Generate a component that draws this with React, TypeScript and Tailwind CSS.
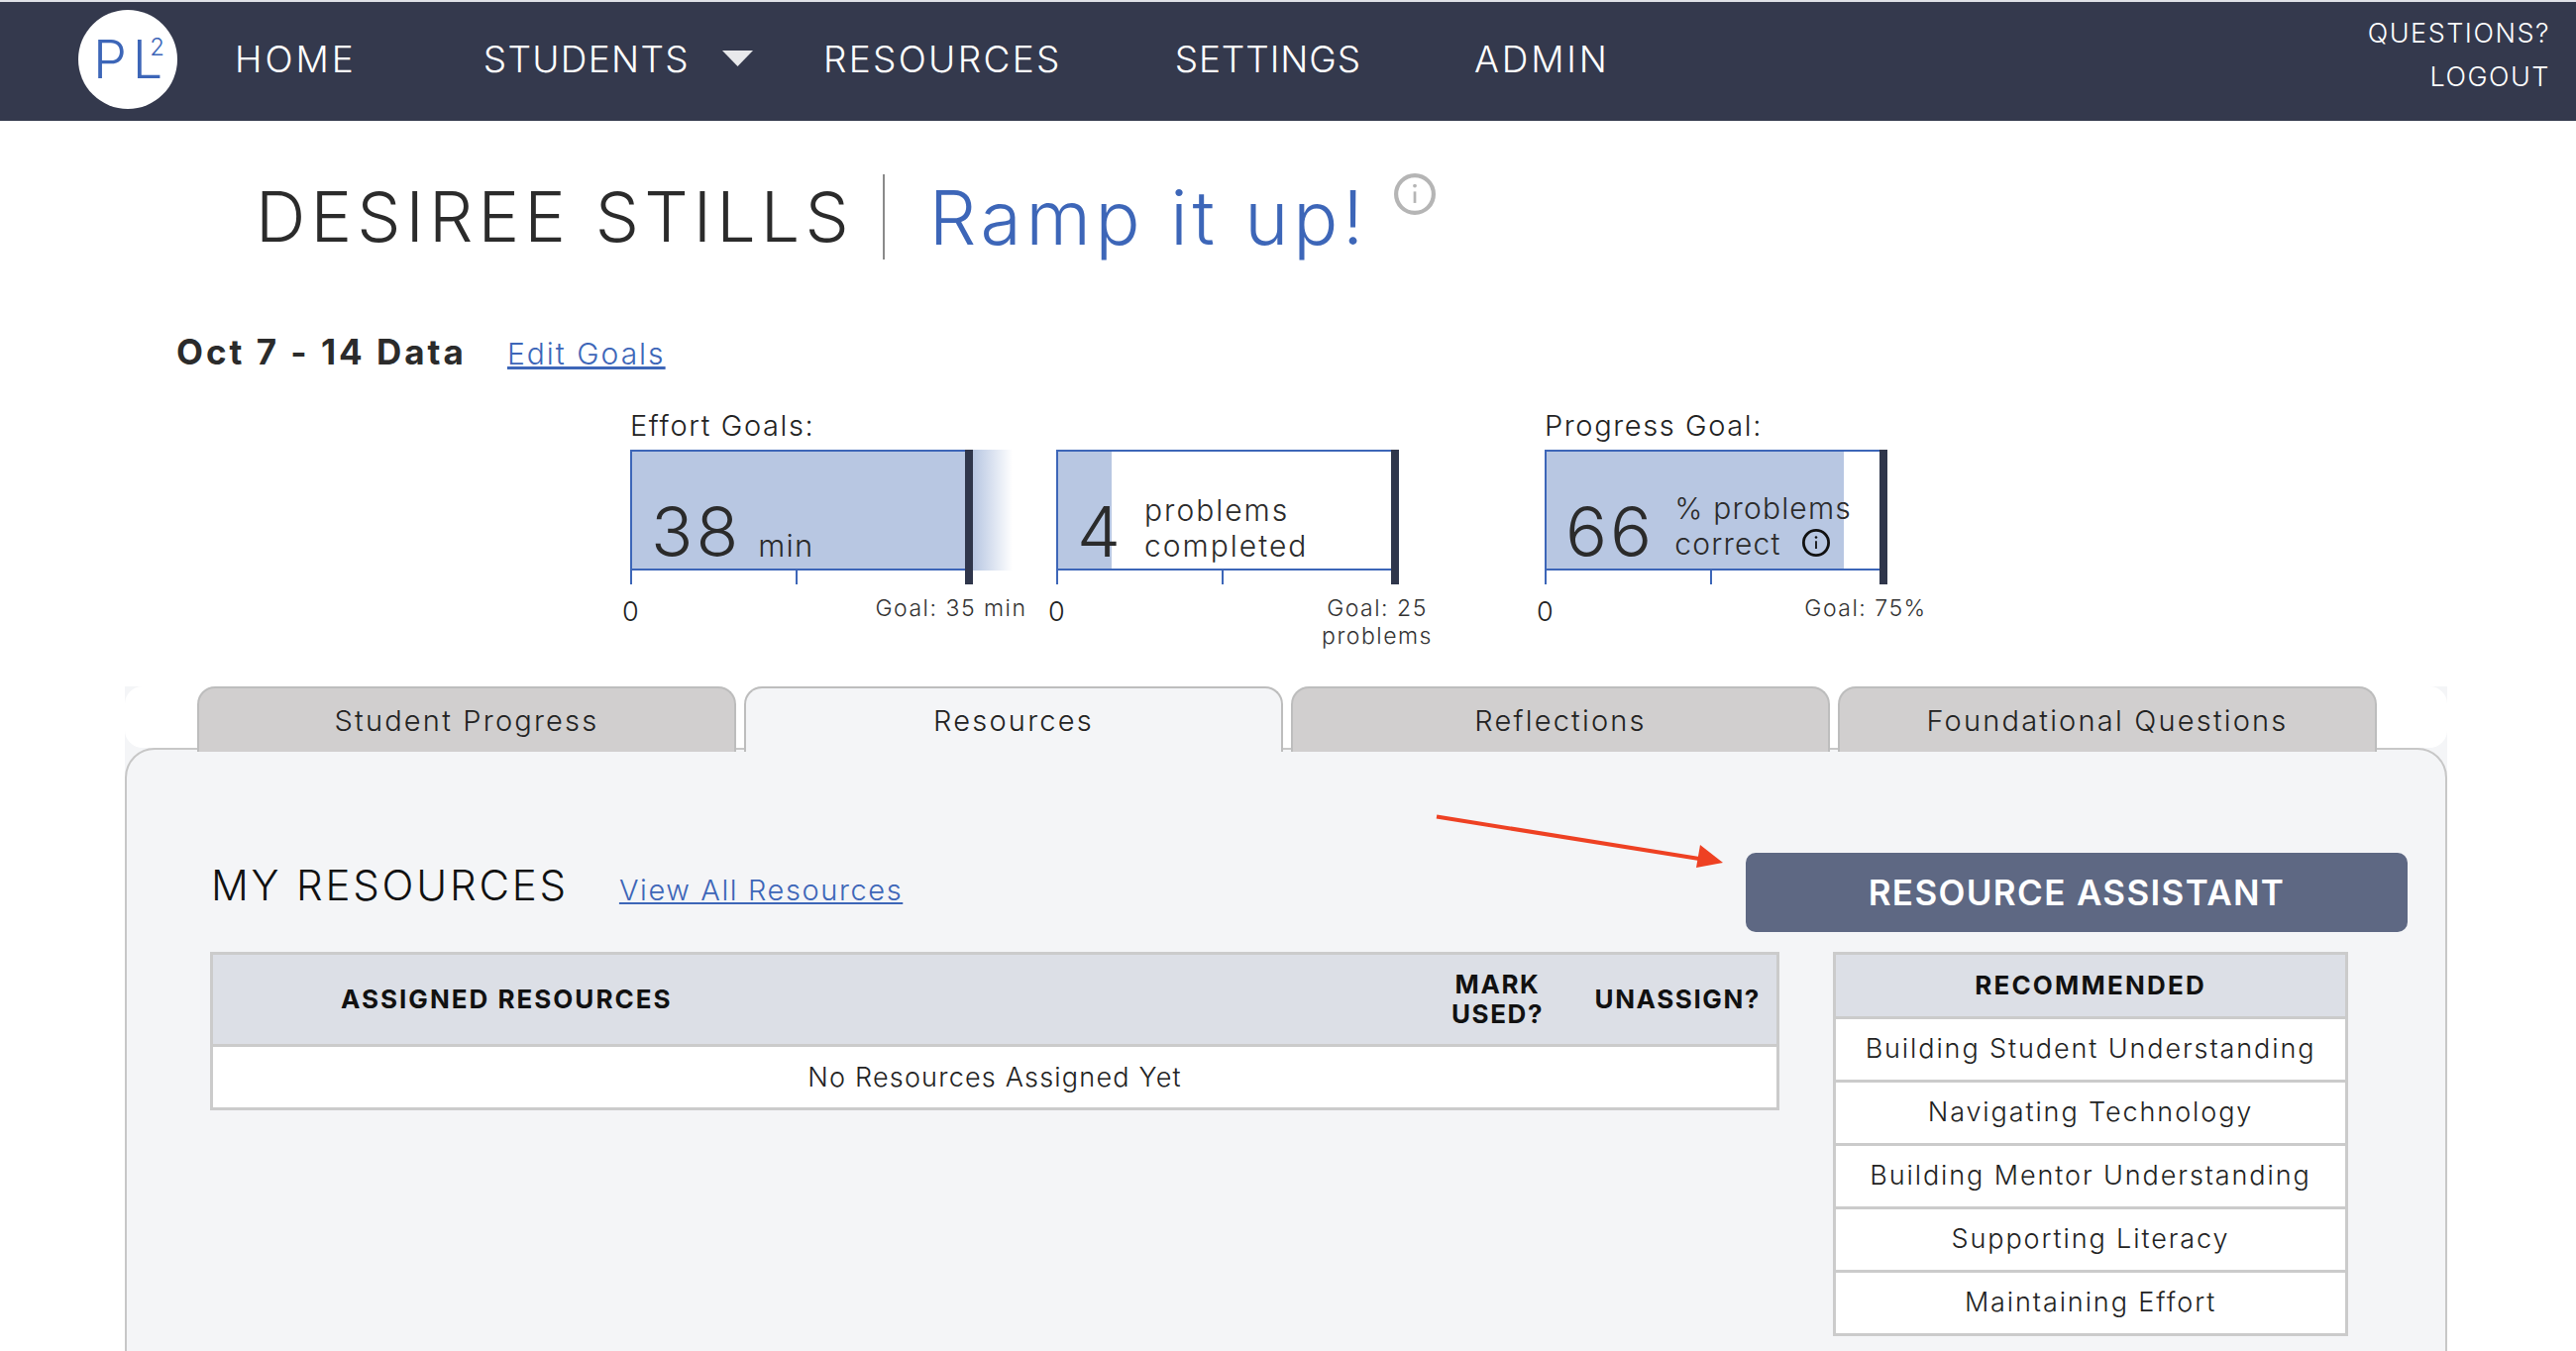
import React from "react";

const FONT = "font-['Inter','Liberation_Sans',sans-serif]";

function GoalBar({
  label,
  fill,
  over = false,
  value,
  goal,
  children,
}: {
  label?: string;
  fill: string;
  over?: boolean;
  value: string;
  goal: React.ReactNode;
  children: React.ReactNode;
}) {
  return (
    <div className="w-[346px]">
      <div className="h-[39px] text-[29px] leading-[30px] tracking-[1.6px] text-[#222] font-light">{label}</div>
      <div className="relative">
        <div className="relative h-[122px] border-y-2 border-l-2 border-[#3d66b8]">
          <div className={`absolute inset-y-0 left-0 bg-[#b8c7e2] ${fill}`} />
          <div className="relative flex h-full items-end pl-[19px] text-[#2b2b2b]">
            <span className="-mb-[3px] text-[70px] leading-[80px] font-light tracking-[3px]">{value}</span>
            {children}
          </div>
        </div>
        <div className="flex h-[14px]">
          <div className="w-[167px] border-l-2 border-[#3d66b8]" />
          <div className="border-l-2 border-[#3d66b8]" />
        </div>
        <div className="absolute right-0 top-0 h-[136px] w-2 bg-[#2f364b]" />
        {over && (
          <div className="absolute left-full top-0 h-[122px] w-[40px] bg-gradient-to-r from-[#b8c7e2] to-white" />
        )}
      </div>
      <div className="flex justify-between">
        <span className="-ml-2 mt-[13px] text-[27px] leading-[30px] font-light text-[#222]">0</span>
        <span className="-mr-[63px] mt-[10px] w-[170px] text-center text-[23px] leading-[28px] font-light tracking-[1.5px] text-[#333]">
          {goal}
        </span>
      </div>
    </div>
  );
}

function InfoIcon({ className, weight = 3 }: { className: string; weight?: number }) {
  return (
    <svg viewBox="0 0 40 40" className={className} fill="none" stroke="currentColor">
      <circle cx="20" cy="20" r="18" strokeWidth={weight} />
      <circle cx="20" cy="12" r="1.8" fill="currentColor" stroke="none" />
      <path d="M20 17.5v11" strokeWidth="2.6" />
    </svg>
  );
}

function Tab({ label, active = false }: { label: string; active?: boolean }) {
  return (
    <div
      className={`relative z-10 flex h-[66px] w-[544px] items-center justify-center rounded-t-[18px] border-x-2 border-t-2 border-[#bdbdbd] pt-[1px] text-[29px] font-light tracking-[2.2px] text-[#222] ${
        active ? "bg-[#f4f5f7]" : "bg-[#d1cfcf]"
      }`}
    >
      {label}
    </div>
  );
}

const recommended = [
  "Building Student Understanding",
  "Navigating Technology",
  "Building Mentor Understanding",
  "Supporting Literacy",
  "Maintaining Effort",
];

const navLink = "-mt-[2px] text-[37px] leading-none font-light text-white";

export default function App() {
  return (
    <div className={`h-[1364px] w-[2600px] overflow-hidden bg-white ${FONT}`}>
      <nav className="flex h-[122px] items-center border-t-2 border-[#dfe1e7] bg-[#34394d] pb-[4px] pl-[79px]">
        <div className="flex h-[100px] w-[100px] items-center justify-center rounded-full bg-white pl-[2px] text-[#3d66b8]">
          <span className="text-[54px] leading-none font-light tracking-[6px]">PL</span>
          <span className="relative -ml-[19px] mb-[24px] text-[24px] leading-none font-light">2</span>
        </div>
        <a className={`${navLink} ml-[58px] tracking-[3px]`}>HOME</a>
        <a className={`${navLink} ml-[128px] tracking-[1.3px]`}>STUDENTS</a>
        <svg viewBox="0 0 31 16" className="-mt-[2px] ml-[33px] h-4 w-[31px] fill-[#e8e9eb]">
          <path d="M0 0h31L15.5 16z" />
        </svg>
        <a className={`${navLink} ml-[71px] tracking-[2.3px]`}>RESOURCES</a>
        <a className={`${navLink} ml-[114px] tracking-[0.9px]`}>SETTINGS</a>
        <a className={`${navLink} ml-[114px] tracking-[2.8px]`}>ADMIN</a>
        <div className="ml-auto mr-[26px] flex flex-col items-end gap-[17px] self-start pt-[18px] text-[27px] leading-[27px] font-light tracking-[1.5px] text-white">
          <a>QUESTIONS?</a>
          <a>LOGOUT</a>
        </div>
      </nav>

      <div className="mt-[54px] flex h-[86px] items-center pl-[258px]">
        <h1 className="text-[70px] leading-none font-light tracking-[5.1px] text-[#2b2b2b]">DESIREE STILLS</h1>
        <div className="ml-[29px] h-[86px] w-[2px] bg-[#8a8a8a]" />
        <span className="ml-[45px] text-[75px] leading-none font-light tracking-[4.7px] text-[#3d66b8]">
          Ramp it up!
        </span>
        <InfoIcon className="mb-[46px] ml-[26px] h-[42px] w-[42px] text-[#b5b5b5]" weight={4} />
      </div>

      <div className="mt-[73px] flex items-baseline pl-[178px]">
        <span className="text-[35px] leading-[40px] font-bold tracking-[3px] text-[#2b2b2b]">Oct 7 - 14 Data</span>
        <a className="ml-[41px] text-[30px] font-light tracking-[2px] text-[#3d66b8] underline">Edit Goals</a>
      </div>

      <div className="mt-[35px] flex h-[278px] pl-[636px]">
        <GoalBar label="Effort Goals:" fill="w-[338px]" over value="38" goal="Goal: 35 min">
          <span className="mb-[5px] ml-[17px] text-[31px] leading-[36px] font-light tracking-[1.3px]">min</span>
        </GoalBar>
        <div className="ml-[84px]">
          <GoalBar
            fill="w-[54px]"
            value="4"
            goal={
              <>
                Goal: 25
                <br />
                problems
              </>
            }
          >
            <span className="mb-[5px] ml-[21px] text-[30px] leading-[36px] font-light tracking-[2px]">
              problems
              <br />
              completed
            </span>
          </GoalBar>
        </div>
        <div className="ml-[147px]">
          <GoalBar label="Progress Goal:" fill="w-[300px]" value="66" goal="Goal: 75%">
            <span className="mb-[5px] ml-[20px] text-[30px] leading-[36px] font-light tracking-[1.2px] whitespace-nowrap">
              % problems
              <br />
              correct
              <InfoIcon className="mb-[7px] ml-[21px] inline h-[28px] w-[28px] text-[#111]" weight={4} />
            </span>
          </GoalBar>
        </div>
      </div>

      <div className="ml-[126px] h-[700px] w-[2344px] bg-[#f4f5f7]">
        <div className="flex h-[62px] gap-2 rounded-[18px] bg-white pl-[73px]">
          <Tab label="Student Progress" />
          <Tab label="Resources" active />
          <Tab label="Reflections" />
          <Tab label="Foundational Questions" />
        </div>

        <section className="relative h-[640px] rounded-t-[30px] border-2 border-[#c7c7c7] bg-[#f4f5f7] pl-[84px] pr-[38px] pt-[104px]">
          {/* red annotation arrow */}
          <svg className="absolute left-[1321px] top-[64px] h-[56px] w-[292px]" viewBox="0 0 292 56">
            <path d="M1 3.5 266 46" stroke="#ee4123" strokeWidth="4" fill="none" />
            <path d="M290 50 263 55 267 32z" fill="#ee4123" />
          </svg>

          <div className="flex h-[80px] items-center">
            <h2 className="-mt-[14px] ml-[1px] text-[42px] leading-none font-light tracking-[2.8px] text-[#111]">
              MY RESOURCES
            </h2>
            <a className="-mt-[5px] ml-[51px] text-[29px] font-light tracking-[1.6px] text-[#3d66b8] underline">
              View All Resources
            </a>
            <button className="ml-auto h-[80px] w-[668px] rounded-[10px] bg-[#5e6883] text-[35px] font-semibold tracking-[1.35px] text-white">
              RESOURCE ASSISTANT
            </button>
          </div>

          <div className="mt-[20px] flex items-start">
            <div className="w-[1584px] border-[3px] border-[#cbcbcb] bg-white text-[#111]">
              <div className="flex h-[93px] items-center border-b-[3px] border-[#cbcbcb] bg-[#dcdfe6] text-[26px] leading-[30px] font-bold tracking-[1.6px]">
                <span className="ml-[129px] tracking-[2px]">ASSIGNED RESOURCES</span>
                <span className="ml-auto w-[120px] text-center">
                  MARK
                  <br />
                  USED?
                </span>
                <span className="ml-[38px] mr-[16px]">UNASSIGN?</span>
              </div>
              <div className="flex h-[61px] items-center justify-center pt-[2px] text-[27px] font-light tracking-[1.2px] text-[#222]">
                No Resources Assigned Yet
              </div>
            </div>

            <div className="ml-[54px] w-[520px] border-[3px] border-[#cbcbcb] bg-white">
              <div className="flex h-[62px] items-center justify-center bg-[#dcdfe6] pb-[2px] text-[26px] font-bold tracking-[2.2px] text-[#111]">
                RECOMMENDED
              </div>
              {recommended.map((item) => (
                <div
                  key={item}
                  className="flex h-[64px] items-center justify-center border-t-[3px] border-[#cbcbcb] text-[27px] font-light tracking-[1.9px] text-[#222]"
                >
                  {item}
                </div>
              ))}
            </div>
          </div>
        </section>
      </div>
    </div>
  );
}
